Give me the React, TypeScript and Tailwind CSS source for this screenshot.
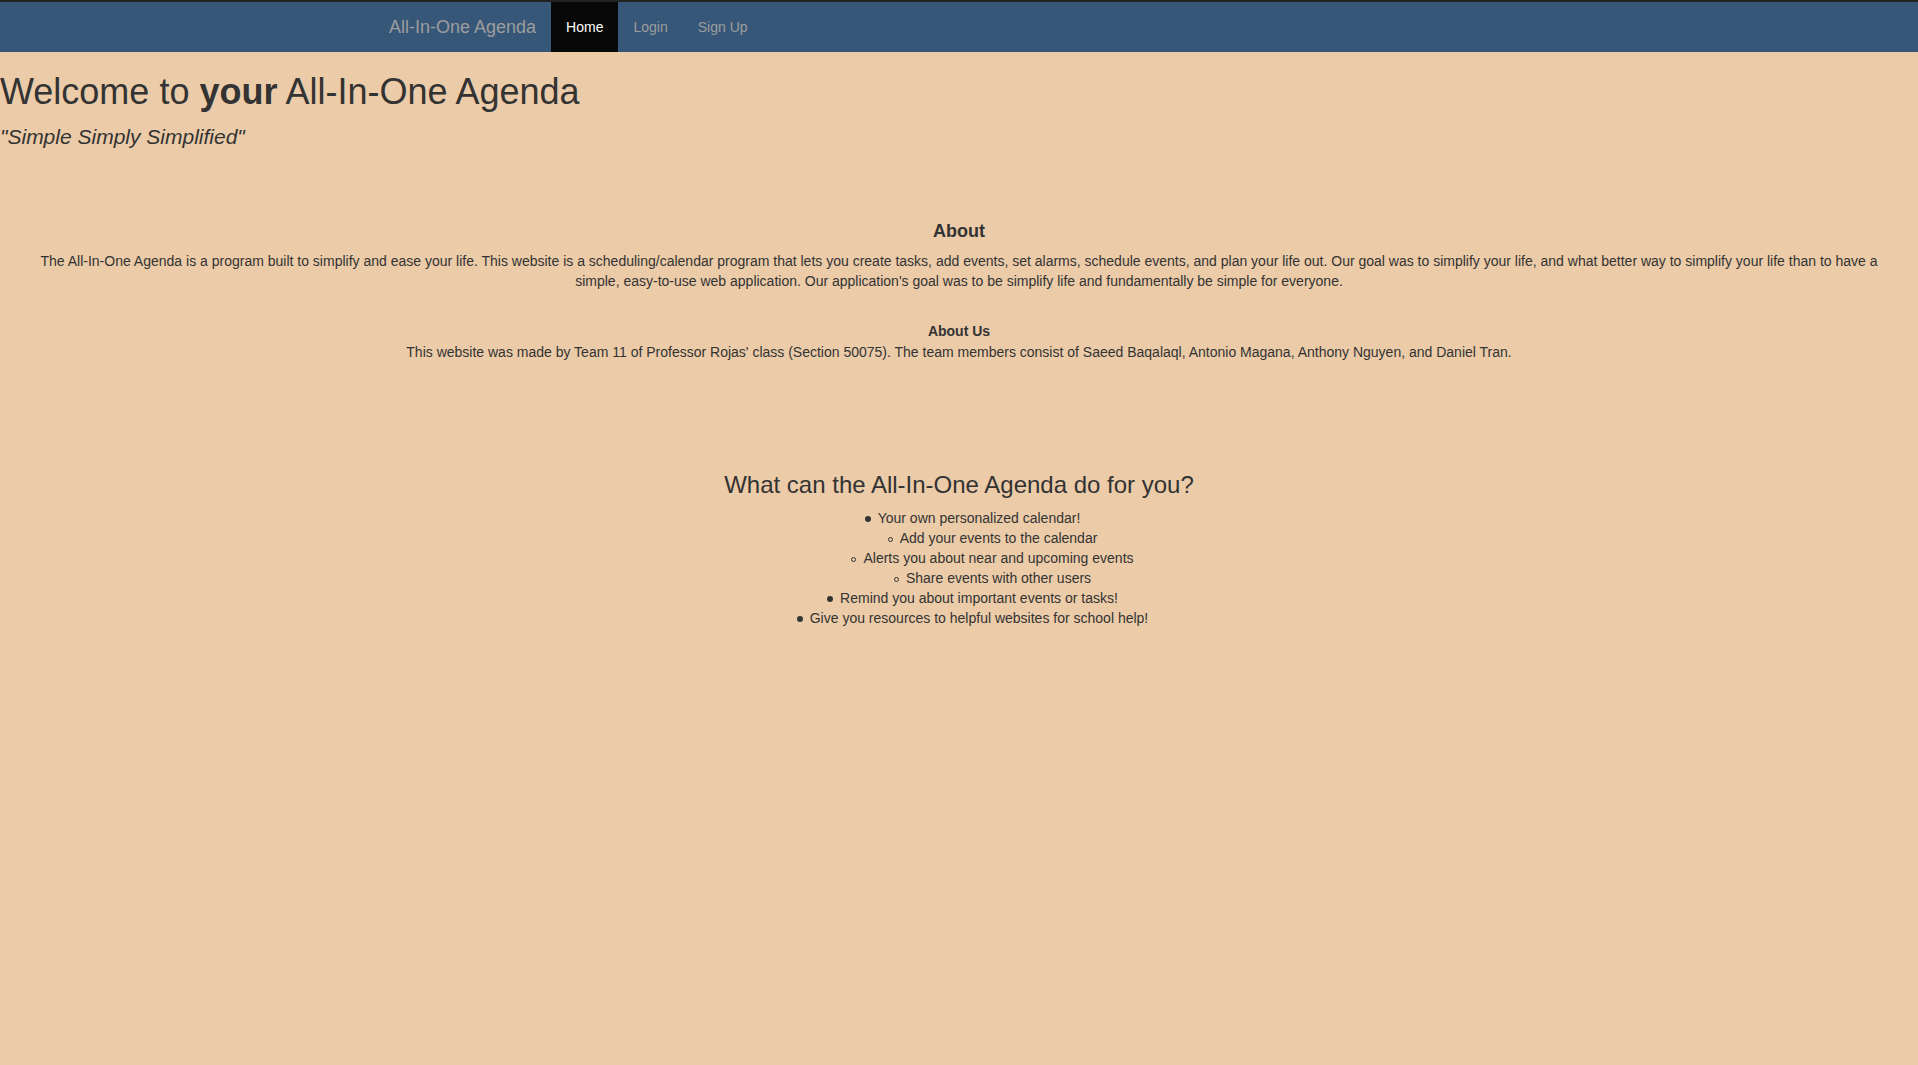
const dot =
  "before:content-[''] before:inline-block before:w-[6px] before:h-[6px] before:rounded-full before:bg-[#333] before:mr-[7px] before:align-middle";
const ring =
  "before:content-[''] before:inline-block before:w-[5px] before:h-[5px] before:rounded-full before:border before:border-[#333] before:mr-[7px] before:align-middle";

export default function App() {
  return (
    <div className="min-h-screen bg-[#eccba8] text-[#333] font-['Liberation_Sans',Arial,sans-serif] text-[14px] leading-[20px]">
      {/* Navbar */}
      <nav className="border-t-2 border-[#222] bg-[#375778] h-[52px]">
        <div className="w-[1170px] mx-auto px-[15px] flex h-[50px]">
          <a href="#" className="px-[15px] py-[15px] text-[18px] leading-[20px] text-[#9d9d9d] -ml-[15px]">
            All-In-One Agenda
          </a>
          <ul className="flex">
            <li>
              <a href="#" className="block px-[15px] py-[15px] leading-[20px] bg-[#080808] text-white">Home</a>
            </li>
            <li>
              <a href="#" className="block px-[15px] py-[15px] leading-[20px] text-[#9d9d9d]">Login</a>
            </li>
            <li>
              <a href="#" className="block px-[15px] py-[15px] leading-[20px] text-[#9d9d9d]">Sign Up</a>
            </li>
          </ul>
        </div>
      </nav>

      {/* Header */}
      <header>
        <h1 className="mt-[20px] mb-[10px] text-[36px] leading-[1.1] font-normal">
          Welcome to <b>your</b> All-In-One Agenda
        </h1>
        <p className="text-[21px] leading-[30px] italic">"Simple Simply Simplified"</p>
      </header>

      {/* About */}
      <section className="px-[24px] text-center mt-[70px]">
        <h4 className="text-[18px] leading-[1.1] font-bold mb-[10px]">About</h4>
        <p>
          The All-In-One Agenda is a program built to simplify and ease your life. This website is a scheduling/calendar program that lets you create tasks, add events, set alarms, schedule events, and plan your life out. Our goal was to simplify your life, and what better way to simplify your life than to have a simple, easy-to-use web application. Our application's goal was to be simplify life and fundamentally be simple for everyone.
        </p>
        <h5 className="mt-[33px] text-[14px] leading-[1.1] font-bold mb-[2px]">About Us</h5>
        <p>
          This website was made by Team 11 of Professor Rojas' class (Section 50075). The team members consist of Saeed Baqalaql, Antonio Magana, Anthony Nguyen, and Daniel Tran.
        </p>
      </section>

      {/* Features */}
      <section className="text-center mt-[110px]">
        <h3 className="text-[24px] leading-[1.1] font-normal mb-[10px]">What can the All-In-One Agenda do for you?</h3>
        <ul className="pl-[27px]">
          <li>
            <span className={dot}>Your own personalized calendar!</span>
            <ul className="pl-[40px]">
              <li className={ring}>Add your events to the calendar</li>
              <li className={ring}>Alerts you about near and upcoming events</li>
              <li className={ring}>Share events with other users</li>
            </ul>
          </li>
          <li className={dot}>Remind you about important events or tasks!</li>
          <li className={dot}>Give you resources to helpful websites for school help!</li>
        </ul>
      </section>
    </div>
  );
}
